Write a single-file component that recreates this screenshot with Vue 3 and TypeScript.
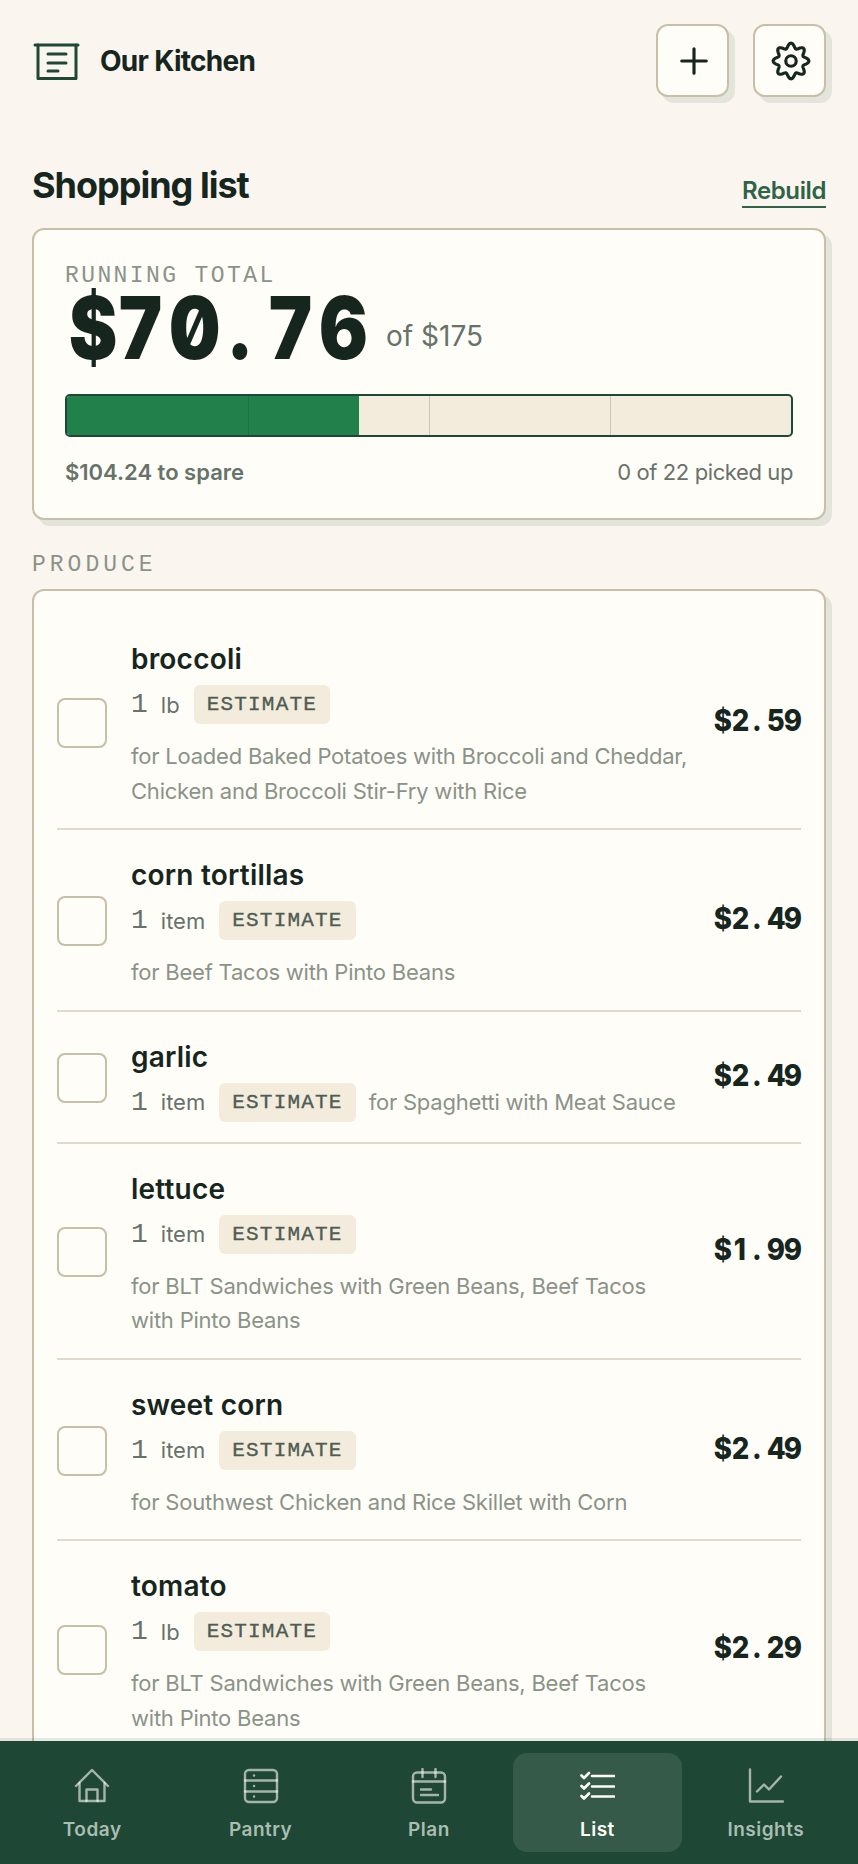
<script setup lang="ts">
interface Item {
  name: string
  qty: string
  unit: string
  price: string
  note: string
  inline?: boolean
}

const items: Item[] = [
  { name: 'broccoli', qty: '1', unit: 'lb', price: '$2.59', note: 'for Loaded Baked Potatoes with Broccoli and Cheddar, Chicken and Broccoli Stir-Fry with Rice' },
  { name: 'corn tortillas', qty: '1', unit: 'item', price: '$2.49', note: 'for Beef Tacos with Pinto Beans' },
  { name: 'garlic', qty: '1', unit: 'item', price: '$2.49', note: 'for Spaghetti with Meat Sauce', inline: true },
  { name: 'lettuce', qty: '1', unit: 'item', price: '$1.99', note: 'for BLT Sandwiches with Green Beans, Beef Tacos with Pinto Beans' },
  { name: 'sweet corn', qty: '1', unit: 'item', price: '$2.49', note: 'for Southwest Chicken and Rice Skillet with Corn' },
  { name: 'tomato', qty: '1', unit: 'lb', price: '$2.29', note: 'for BLT Sandwiches with Green Beans, Beef Tacos with Pinto Beans' },
]

const tabs = ['Today', 'Pantry', 'Plan', 'List', 'Insights']

// wavy 8-tooth cog outline
const gear = (() => {
  const n = 8
  const pts: string[] = []
  for (let i = 0; i <= 240; i++) {
    const a = (i / 240) * Math.PI * 2
    const r = 8.8 + 1.4 * Math.cos(n * a)
    const x = 12 + r * Math.sin(a)
    const y = 12 - r * Math.cos(a)
    pts.push(`${x.toFixed(2)} ${y.toFixed(2)}`)
  }
  return 'M' + pts.join('L') + 'Z'
})()
</script>

<template>
  <div class="app">
    <main class="main">
      <header class="top">
        <div class="brand">
          <svg class="logo" viewBox="0 0 48 38" fill="none" stroke="#1f4735" stroke-width="3" stroke-linecap="round" stroke-linejoin="round">
            <path d="M3 3h43" />
            <path d="M6 3v33.500h38V3" />
            <path d="M16 12h18M16 21h18M16 29h10" />
          </svg>
          <span class="brand-name">Our Kitchen</span>
        </div>
        <div class="actions">
          <button class="icon-btn">
            <svg viewBox="0 0 24 24" fill="none" stroke="#16261e" stroke-width="1.8" stroke-linecap="round"><path d="M12 5v14M5 12h14" /></svg>
          </button>
          <button class="icon-btn">
            <svg viewBox="0 0 24 24" fill="none" stroke="#16261e" stroke-width="1.8" stroke-linejoin="round"><path :d="gear" /><circle cx="12" cy="12" r="3" /></svg>
          </button>
        </div>
      </header>

      <div class="title-row">
        <h1>Shopping list</h1>
        <a class="rebuild">Rebuild</a>
      </div>

      <section class="card total">
        <div class="label">RUNNING TOTAL</div>
        <div class="amount-row">
          <span class="amount"><span v-for="(ch, i) in '$70.76'" :key="i" class="cell">{{ ch }}</span></span>
          <span class="of">of $175</span>
        </div>
        <div class="bar">
          <div class="fill"></div>
          <i class="tick t1 dark"></i>
          <i class="tick t2"></i>
          <i class="tick t3"></i>
        </div>
        <div class="bar-foot">
          <strong>$104.24 to spare</strong>
          <span>0 of 22 picked up</span>
        </div>
      </section>

      <div class="label section-label">PRODUCE</div>

      <section class="card list">
        <div v-for="item in items" :key="item.name" class="row">
          <span class="check"></span>
          <div class="body">
            <div class="name">{{ item.name }}</div>
            <div class="meta">
              <span class="qty">{{ item.qty }}</span>
              <span class="unit">{{ item.unit }}</span>
              <span class="badge">ESTIMATE</span>
              <span class="note" :class="{ wide: !item.inline }">{{ item.note }}</span>
            </div>
          </div>
          <div class="price"><span v-for="(ch, i) in item.price" :key="i" class="cell">{{ ch }}</span></div>
        </div>
      </section>
    </main>

    <nav class="nav">
      <a v-for="tab in tabs" :key="tab" class="tab" :class="{ active: tab === 'List' }">
        <svg v-if="tab === 'Today'" viewBox="0 0 36 36" fill="none" stroke-width="2.4" stroke-linejoin="round" stroke-linecap="round">
          <path d="M2 18 18 2l16 16" />
          <path d="M5.500 15v18h25V15" />
          <path d="M12.500 33V21.500h11V33" />
        </svg>
        <svg v-else-if="tab === 'Pantry'" viewBox="0 0 36 36" fill="none" stroke-width="2.4" stroke-linejoin="round" stroke-linecap="round">
          <rect x="2" y="2" width="32" height="32" rx="4" />
          <path d="M2 12.500h32M2 23.500h32" />
          <path d="M11 7.500h.1M11 18h.1M11 28.500h.1" />
        </svg>
        <svg v-else-if="tab === 'Plan'" viewBox="0 0 36 36" fill="none" stroke-width="2.4" stroke-linejoin="round" stroke-linecap="round">
          <rect x="2" y="4.500" width="32" height="30" rx="4" />
          <path d="M11.500 1v8M24.500 1v8" />
          <path d="M2 13.500h32" />
          <path d="M10 21.500h10M10 27h17" />
        </svg>
        <svg v-else-if="tab === 'List'" viewBox="0 0 36 36" fill="none" stroke-width="2.6" stroke-linejoin="round" stroke-linecap="round">
          <path d="M13 8h22M13 18.500h22M13 28.500h22" />
          <path d="M2.500 7.500l2.500 2.500 5-5M2.500 18l2.500 2.500 5-5M2.500 28l2.500 2.500 5-5" />
        </svg>
        <svg v-else viewBox="0 0 36 36" fill="none" stroke-width="2.4" stroke-linejoin="round" stroke-linecap="round">
          <path d="M2 1.500v32h33" />
          <path d="M9 23.500l7-7 5 5 12-13" />
        </svg>
        <span>{{ tab }}</span>
      </a>
    </nav>
  </div>
</template>

<style>
html,
body {
  margin: 0;
  background: #faf6ef;
}
</style>

<style scoped>
* {
  box-sizing: border-box;
}

.app {
  width: 858px;
  height: 1864px;
  display: flex;
  flex-direction: column;
  overflow: hidden;
  background: #faf6ef;
  color: #16261e;
  font-family: Inter, 'Noto Sans', sans-serif;
}

.main {
  flex: 1;
  min-height: 0;
  overflow: hidden;
  padding: 24px 32px 0;
}

.top {
  display: flex;
  justify-content: space-between;
  align-items: center;
  height: 73px;
}

.brand {
  display: flex;
  align-items: center;
  gap: 20px;
}

.logo {
  width: 48px;
  height: 38px;
}

.brand-name {
  font-size: 28px;
  font-weight: 700;
  letter-spacing: -0.7px;
}

.actions {
  display: flex;
  gap: 24px;
}

.icon-btn {
  width: 73px;
  height: 73px;
  padding: 0 0 0 2px;
  display: flex;
  align-items: center;
  justify-content: center;
  background: #fffdf8;
  border: 2px solid #c9bfa8;
  border-radius: 12px;
  box-shadow: 6px 6px 0 rgba(31, 71, 53, 0.1);
}

.icon-btn svg {
  width: 42px;
  height: 42px;
}

.title-row {
  display: flex;
  justify-content: space-between;
  align-items: flex-end;
  margin-top: 66px;
  height: 45px;
}

h1 {
  margin: 0;
  font-size: 36px;
  line-height: 45px;
  font-weight: 700;
  letter-spacing: -1px;
}

.rebuild {
  font-size: 24px;
  line-height: 30px;
  font-weight: 600;
  color: #2f6348;
  border-bottom: 2px solid #2f6348;
  letter-spacing: -0.4px;
}

.card {
  background: #fffdf8;
  border: 2px solid #c9bfa8;
  border-radius: 12px;
  box-shadow: 6px 6px 0 rgba(31, 71, 53, 0.1);
}

.total {
  margin-top: 20px;
  height: 292px;
  padding: 34px 31px 0;
}

.label {
  font-family: 'Liberation Mono', monospace;
  font-size: 23px;
  line-height: 24px;
  letter-spacing: 2.4px;
  color: #8a9388;
}

.amount-row {
  display: flex;
  align-items: center;
  gap: 21px;
  margin-top: -5px;
  height: 90px;
}

.cell {
  display: inline-block;
  text-align: center;
  font-variant-numeric: slashed-zero;
}

.amount {
  display: flex;
  font-weight: 900;
  font-size: 86px;
  line-height: 90px;
  color: #16261e;
}

.amount .cell {
  width: 50px;
  transform: scaleX(0.85);
}

.of {
  margin-top: 15px;
  font-size: 28px;
  color: #66726a;
}

.bar {
  position: relative;
  height: 43px;
  margin-top: 21px;
  background: #f3ecdd;
  border: 2px solid #1f4735;
  border-radius: 5px;
  overflow: hidden;
}

.fill {
  height: 100%;
  width: 40.4%;
  background: #22804a;
}

.tick {
  position: absolute;
  top: 0;
  bottom: 0;
  width: 1px;
  background: #c9c6b6;
}

.tick.dark {
  background: #1f6f42;
}

.t1 {
  left: 25%;
}

.t2 {
  left: 50%;
}

.t3 {
  left: 75%;
}

.bar-foot {
  display: flex;
  justify-content: space-between;
  margin-top: 20px;
  font-size: 22px;
  line-height: 30px;
  color: #66726a;
  letter-spacing: -0.4px;
}

.bar-foot strong {
  font-weight: 600;
  letter-spacing: 0;
}

.section-label {
  margin-top: 33px;
  padding-bottom: 12px;
  letter-spacing: 4px;
}

.list {
  padding: 23px 23px 0;
}

.row {
  display: flex;
  align-items: center;
  gap: 24px;
  padding: 20px 0 20px;
  border-bottom: 2px solid #e0dacb;
}

.check {
  flex: none;
  width: 50px;
  height: 50px;
  margin-top: 3px;
  background: #fffdf8;
  border: 2px solid #c9bfa8;
  border-radius: 8px;
}

.body {
  flex: 1;
  min-width: 0;
  max-width: 558px;
  padding-top: 7px;
}

.name {
  font-size: 28px;
  line-height: 36px;
  font-weight: 600;
  letter-spacing: 0.2px;
}

.meta {
  display: flex;
  flex-wrap: wrap;
  align-items: center;
  margin-top: 8px;
  row-gap: 15px;
}

.qty {
  font-family: 'Liberation Mono', monospace;
  font-size: 28px;
  line-height: 39px;
  color: #66726a;
  margin-right: 13px;
}

.unit {
  font-size: 22px;
  color: #66726a;
  margin-right: 14px;
}

.badge {
  height: 39px;
  padding: 0 13px;
  display: flex;
  align-items: center;
  font-family: 'Liberation Mono', monospace;
  font-size: 21px;
  letter-spacing: 1.2px;
  color: #4f5c53;
  background: #f3ecdd;
  border-radius: 6px;
  -webkit-text-stroke: 0.35px #4f5c53;
}

.note {
  margin-left: 13px;
  font-size: 22px;
  line-height: 34.5px;
  color: #8a9388;
  letter-spacing: -0.22px;
}

.note.wide {
  margin-left: 0;
  flex-basis: 100%;
}

.price {
  display: flex;
  margin-left: auto;
  margin-bottom: 3px;
  font-weight: 800;
  font-size: 30px;
}

.price .cell {
  width: 17.600px;
  transform: scaleX(0.92);
}

.nav {
  flex: none;
  height: 123px;
  display: grid;
  grid-template-columns: repeat(5, 1fr);
  padding: 12px 8px;
  background: #1f4735;
  box-shadow: 0 -3px 0 rgba(31, 38, 30, 0.1);
  position: relative;
}

.tab {
  display: flex;
  flex-direction: column;
  align-items: center;
  justify-content: center;
  gap: 14px;
  padding-top: 4px;
  border-radius: 14px;
  color: #a9bdb1;
  font-size: 19px;
  font-weight: 600;
  letter-spacing: 0.5px;
}

.tab svg {
  width: 36px;
  height: 36px;
  stroke: #fffdf8;
  stroke-opacity: 0.6;
}

.tab.active {
  background: #355a49;
  color: #fffdf8;
}

.tab.active svg {
  stroke-opacity: 1;
}
</style>
